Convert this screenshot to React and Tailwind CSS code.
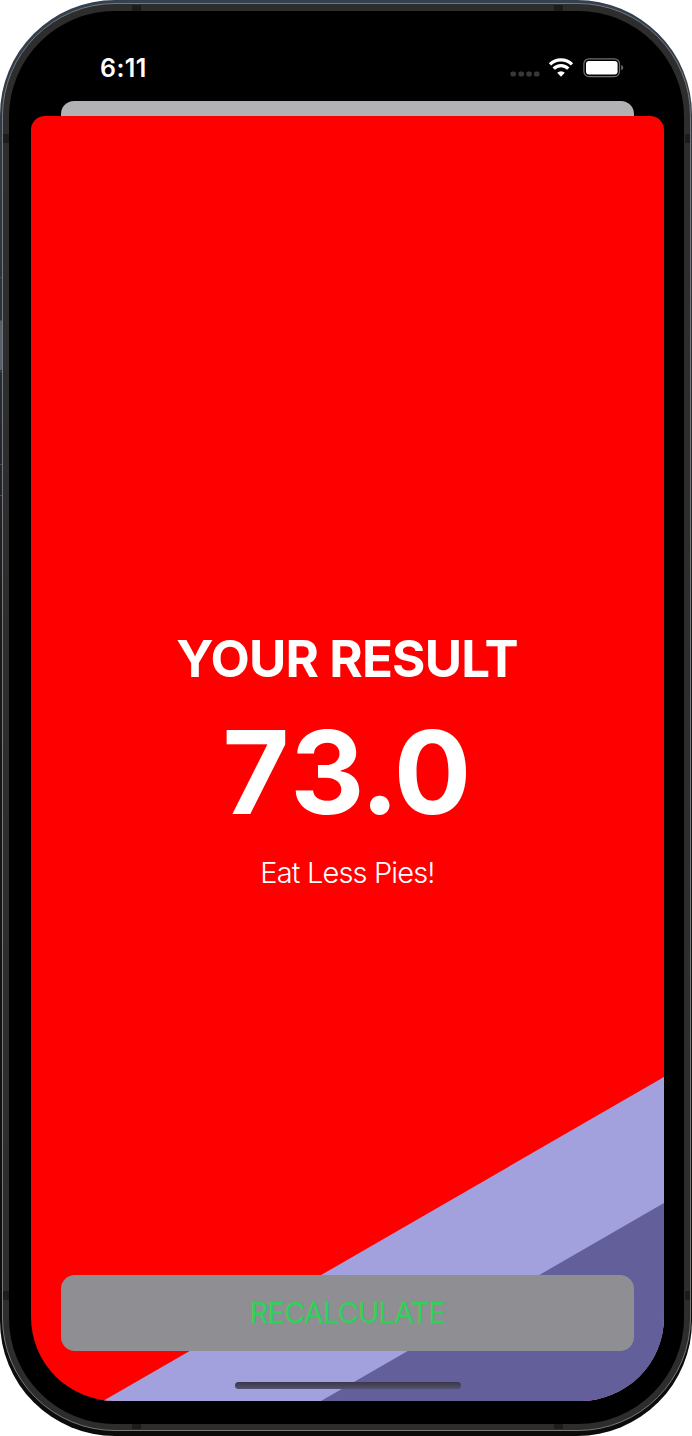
function StatusIcons() {
  return (
    <svg width="114" height="22" viewBox="0 0 114 22" className="block">
      <g fill="#38383a">
        <rect x="0.5" y="14.5" width="5.5" height="5" rx="1.8" />
        <rect x="8.5" y="14.5" width="5.5" height="5" rx="1.8" />
        <rect x="16.3" y="14.5" width="5.5" height="5" rx="1.8" />
        <rect x="24" y="14.5" width="5.5" height="5" rx="1.8" />
      </g>
      <g fill="none" stroke="#fff" strokeWidth="3.3">
        <path d="M40 7.4A15.6 15.6 0 0 1 62 7.4" />
        <path d="M43.7 11.7A10.2 10.2 0 0 1 58.3 11.7" />
      </g>
      <path d="M51 19.8L47.2 15.7A5.4 5.4 0 0 1 54.8 15.7Z" fill="#fff" />
      <rect x="73.9" y="1.8" width="35.6" height="17.8" rx="5" fill="none" stroke="#707070" strokeWidth="1.2" />
      <rect x="76" y="4" width="31.6" height="13.6" rx="3" fill="#fff" />
      <path d="M111.2 8Q113.2 8.5 113.2 10.6T111.2 13.2Z" fill="#6c6c6c" />
    </svg>
  );
}

// Short dark antenna breaks printed across the metal band.
function AntennaBreaks() {
  return (
    <svg width="692" height="1436" viewBox="0 0 692 1436" className="pointer-events-none absolute inset-0">
      <g fill="#1c1c1c">
        <rect x="132" y="5" width="9" height="6" />
        <rect x="554" y="5" width="9" height="6" />
        <rect x="132" y="1424" width="9" height="5" />
        <rect x="554" y="1424" width="9" height="5" />
        <rect x="3" y="134" width="6" height="9" />
        <rect x="685" y="134" width="5" height="9" />
        <rect x="3" y="1291" width="6" height="9" />
        <rect x="685" y="1291" width="5" height="9" />
      </g>
      <g fill="#444a50">
        <rect x="0" y="277" width="2" height="1" />
        <rect x="0" y="320" width="2" height="1" />
        <rect x="0" y="371" width="2" height="1" />
        <rect x="0" y="464" width="2" height="1" />
        <rect x="0" y="495" width="2" height="1" />
      </g>
      <rect x="0" y="321" width="2" height="49" fill="#53616f" />
    </svg>
  );
}

function ResultSheet() {
  return (
    <main className="relative flex h-[1285px] flex-col items-center overflow-hidden rounded-t-[14px] rounded-b-[84px] bg-[#ff0000]">
      <svg width="633" height="1285" viewBox="0 0 633 1285" className="absolute inset-0">
        <path d="M72 1285L633 961V1285Z" fill="#a3a1dd" />
        <path d="M290 1285L633 1087V1285Z" fill="#625f9b" />
      </svg>
      <div className="relative flex h-full w-full flex-col items-center px-[30px] pt-[512px]">
        <h1 className="mr-px text-[51px] leading-[62px] font-bold tracking-[-0.85px] whitespace-nowrap">YOUR RESULT</h1>
        <p className="mt-[14px] mr-[3px] text-[115px] leading-[138px] font-bold tracking-[-1.8px]">
          <span className="tracking-[1px]">7</span>
          <span className="tracking-[-4px]">3</span>.0
        </p>
        <p className="mt-[13px] text-[29px] leading-[36px] font-light tracking-[-0.85px]">Eat Less Pies!</p>
        <button className="mt-[384px] h-[76px] w-full rounded-[14px] bg-[#8e8e93] text-[29px] leading-[76px] font-normal tracking-[-0.9px] text-[#30d158]">
          RECALCULATE
        </button>
        <div className="mt-[31px] h-[7px] w-[226px] rounded-full bg-linear-to-b from-[#393848] to-[#535171]" />
      </div>
    </main>
  );
}

export default function App() {
  return (
    <div className="relative h-[1436px] w-[692px] overflow-hidden bg-white font-[Inter,sans-serif] text-white">
      <div className="h-full overflow-hidden rounded-[115px] bg-[linear-gradient(#344150,#2c3440_20%,#17191b_45%,#0c0b09)] pt-[3px] pr-px pb-[5px] pl-[2px]">
        <div className="h-full rounded-[113px] border border-[#777777] bg-[#2d2d2d] px-[6px] pt-[7px] pb-[6px]">
          <div className="h-full rounded-[106px] bg-black pt-[46px] pr-[20px] pl-[22px]">
            <header className="flex h-[44px] justify-between pr-[40px] pl-[69px]">
              <span className="text-[25px] leading-[22px] font-semibold tracking-[0.4px]">6:11</span>
              <StatusIcons />
            </header>
            <div className="mx-[30px] h-[15px] rounded-t-[13px] bg-[#b2b2b5]" />
            <ResultSheet />
          </div>
        </div>
      </div>
      <AntennaBreaks />
    </div>
  );
}
